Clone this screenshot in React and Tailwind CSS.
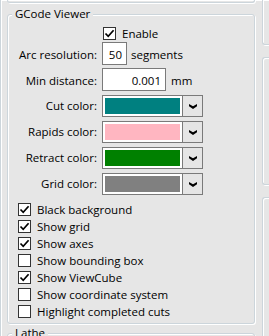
const font = { fontFamily: '"Open Sans", "Noto Sans", sans-serif' };

const groupBorder =
  "border border-[#ccd5db] shadow-[inset_1px_1px_0_#fff,1px_1px_0_#fff]";

const Check = ({ checked }) => (
  <div className="w-[13px] h-[13px] shrink-0 border border-[#333] bg-white flex items-center justify-center">
    {checked && (
      <svg width="11" height="11" viewBox="0 0 11 11">
        <path d="M1.5 5.5 L4.2 8.3 L9.6 2.2" fill="none" stroke="#000" strokeWidth="1.7" />
      </svg>
    )}
  </div>
);

const Chevron = () => (
  <svg width="8" height="5" viewBox="0 0 8 5">
    <path d="M0 0 L4 2.2 L8 0 L8 2.2 L4 5 L0 2.2 Z" fill="#000" />
  </svg>
);

const ColorPicker = ({ color }) => (
  <div className="flex w-[101px] h-[22px] border border-[#7a7a7a] bg-white">
    <div className="flex-1 m-[2px]" style={{ backgroundColor: color }} />
    <div className="w-[20px] border-l border-[#7a7a7a] bg-[#e5e5e5] flex items-center justify-center">
      <Chevron />
    </div>
  </div>
);

const Row = ({ label, className, children }) => (
  <div className={`flex items-center ${className}`}>
    <div className="w-[90px] text-right pr-[1px]">{label}</div>
    <div className="ml-[4px] flex items-center">{children}</div>
  </div>
);

const CheckRow = ({ checked, label }) => (
  <div className="flex items-center gap-[6px] h-[17px] pl-[10px]">
    <Check checked={checked} />
    <span>{label}</span>
  </div>
);

const Group = ({ title, className, children }) => (
  <div className={`relative rounded-[3px] ${groupBorder} ${className}`}>
    <div className="absolute left-[4px] top-[-9px] px-[3px] bg-[#e6e6e6] leading-[16px]">
      {title}
    </div>
    {children}
  </div>
);

export default function App() {
  const colors = [
    ["Cut color:", "#008080"],
    ["Rapids color:", "#ffb6c1"],
    ["Retract color:", "#008000"],
    ["Grid color:", "#808080"],
  ];
  const checks = [
    [true, "Black background"],
    [true, "Show grid"],
    [true, "Show axes"],
    [false, "Show bounding box"],
    [true, "Show ViewCube"],
    [false, "Show coordinate system"],
    [false, "Highlight completed cuts"],
  ];

  return (
    <div
      className={`flex w-[269px] h-[336px] overflow-hidden bg-[#e6e6e6] text-[11.5px] text-black ${groupBorder} border-y-0 border-r-0`}
      style={font}
    >
      <div className="w-[248px] ml-[6px] shrink-0 flex flex-col">
        <div className={`h-[3px] shrink-0 rounded-b-[3px] ${groupBorder} border-t-0`} />
        <Group title="GCode Viewer" className="mt-[11px] h-[310px] shrink-0 pt-[11px]">
          <Row label="" className="h-[15px]">
            <div className="ml-[1px] flex items-center gap-[6px]">
              <Check checked />
              <span>Enable</span>
            </div>
          </Row>
          <Row label={<span className="block pt-[2px]">Arc resolution:</span>} className="h-[23px] mt-[1px]">
            <div className="w-[25px] h-[23px] border border-[#7a7a7a] bg-white flex items-center justify-end pr-[4px] pt-[2px]">
              50
            </div>
            <span className="ml-[4px] pt-[2px]">segments</span>
          </Row>
          <Row label={<span className="block pt-[2px]">Min distance:</span>} className="h-[23px] mt-[3px]">
            <div className="w-[64px] h-[23px] border border-[#7a7a7a] bg-white flex items-center justify-end pr-[4px] pt-[2px]">
              0.001
            </div>
            <span className="ml-[5px] pt-[2px]">mm</span>
          </Row>
          {colors.map(([label, color]) => (
            <Row key={label} label={label} className="h-[22px] mt-[4px]">
              <ColorPicker color={color} />
            </Row>
          ))}
          <div className="mt-[6px] flex flex-col">
            {checks.map(([checked, label]) => (
              <CheckRow key={label} checked={checked} label={label} />
            ))}
          </div>
        </Group>
        <Group title="Lathe" className="mt-[9px] h-[40px] shrink-0" />
      </div>
      <div className="ml-[7px] flex-1 flex flex-col">
        <div className={`h-[45px] shrink-0 rounded-bl-[3px] ${groupBorder} border-t-0 border-r-0`} />
        <div className={`mt-[12px] h-[128px] shrink-0 rounded-l-[3px] ${groupBorder} border-r-0`} />
        <div className={`mt-[12px] h-[200px] shrink-0 rounded-tl-[3px] ${groupBorder} border-r-0`} />
      </div>
    </div>
  );
}
